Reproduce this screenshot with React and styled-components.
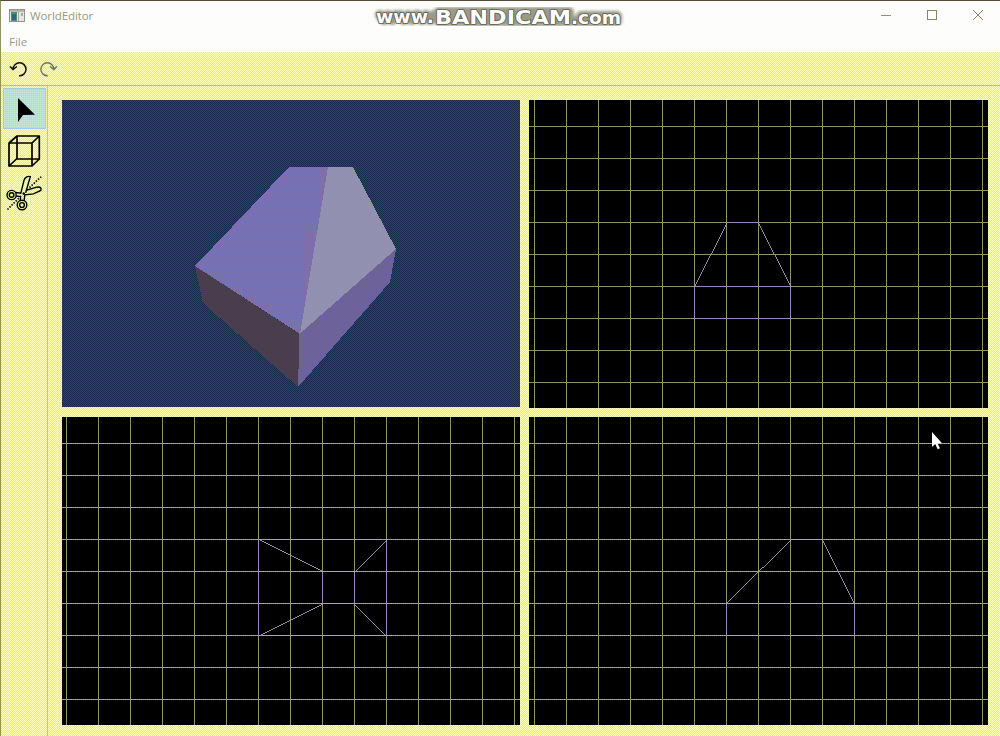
import React from "react";
import styled, { createGlobalStyle, css } from "styled-components";

const Global = createGlobalStyle`
  * { box-sizing: border-box; }
  body { margin: 0; overflow: hidden; }
`;

/* 2x2 ordered pattern that imitates a reduced colour palette */
const dither = (a, b, c, d) => css`
  background-image: conic-gradient(${b} 25%, ${d} 0 50%, ${c} 0 75%, ${a} 0);
  background-size: 2px 2px;
`;

const Window = styled.div`
  width: 1000px;
  height: 736px;
  display: flex;
  flex-direction: column;
  border-left: 1px solid #92925c;
  border-top: 1px solid #55493c;
  font-family: "Open Sans", "Noto Sans", sans-serif;
  font-size: 12px;
  color: #99997c;
  background-image: radial-gradient(circle at 0.5px 0.5px, #fff 0.6px, transparent 0.7px),
    conic-gradient(#dbdbff 25%, #ffffb0 0 50%, #dbdbff 0 75%, #ffffb0 0);
  background-size: 4px 4px, 2px 2px;
`;

const Header = styled.header`
  height: 51px;
  flex: none;
  background-color: #fdfdff;
  background-image: radial-gradient(circle at 0.5px 0.5px, #ffffaa 0.6px, transparent 0.7px),
    radial-gradient(circle at 4.5px 4.5px, #ffffaa 0.6px, transparent 0.7px);
  background-size: 8px 8px;
`;

const TitleBar = styled.div`
  height: 29px;
  display: flex;
  align-items: center;
  padding-left: 8px;
`;

const Title = styled.span`
  margin-left: 5px;
  width: 66px;
  font-size: 11.5px;
  letter-spacing: -0.1px;
`;

const Watermark = styled.svg`
  margin-left: 270px;
  margin-right: auto;
  display: block;
`;

const Controls = styled.div`
  display: flex;
  margin: -1px -1px 0 0;
`;

const Control = styled.button`
  width: 46px;
  height: 29px;
  padding: 0;
  border: 0;
  background: none;
  display: grid;
  place-items: center;
`;

const MenuBar = styled.nav`
  height: 22px;
  display: flex;
  align-items: center;
  padding-left: 8px;
  font-size: 11.5px;
`;

const Toolbar = styled.div`
  height: 34px;
  flex: none;
  display: flex;
  gap: 10px;
  padding: 6px 0 0 7px;
  border-bottom: 1px solid #b9b9a2;
`;

const Body = styled.div`
  flex: 1;
  display: flex;
`;

const Tools = styled.aside`
  width: 47px;
  flex: none;
  border-right: 1px solid #c2c2b4;
  padding: 2px 0 0 2px;
`;

const Tool = styled.button`
  width: 43px;
  height: 41px;
  margin: 0 0 2px;
  padding: 0;
  border: 0;
  display: grid;
  place-items: center;
  background: none;
  ${(p) =>
    p.$active &&
    css`
      ${dither("#b6dbff", "#c8e4dc", "#b6dbc0", "#b6dbff")}
      box-shadow: inset 0 0 0 1px #9ccdf0;
    `}
`;

const Views = styled.main`
  flex: 1;
  display: grid;
  grid-template-columns: 458px 459px;
  grid-template-rows: 308px 308px;
  gap: 9px;
  padding: 14px 0 0 14px;
  position: relative;
`;

const View = styled.svg`
  display: block;
  width: 100%;
  height: ${(p) => (p.$short ? "307px" : "100%")};
  background: #000;
`;

const Pointer = styled.svg`
  position: absolute;
  left: 883px;
  top: 346px;
`;

function Pattern({ id, c }) {
  return (
    <pattern id={id} width="2" height="2" patternUnits="userSpaceOnUse">
      {c.map((f, i) => (
        <rect key={i} x={i % 2} y={i >> 1} width="1" height="1" fill={f} />
      ))}
    </pattern>
  );
}

const VIOLET = "#a184b8";
const LILAC = "#aea2c0";

function Grid({ id, x0, y0, w, pale, wires }) {
  const xs = [];
  const ys = [];
  for (let x = x0; x < w; x += 32) xs.push(x);
  for (let y = y0; y < 308; y += 32) ys.push(y);
  const olive = ["#929255", "#929255", "#929285", "#929285"];
  return (
    <View viewBox={`0 0 ${w} 308`} shapeRendering="crispEdges">
      <defs>
        <Pattern id={id + "v"} c={pale ? [olive[2], olive[2], olive[0], olive[0]] : olive} />
        <Pattern
          id={id + "h"}
          c={pale ? ["#9292a0", "#b0b0a0", "#9292a0", "#b0b0a0"] : ["#929285", "#929255", "#929285", "#929255"]}
        />
      </defs>
      {ys.map((y) => (
        <rect key={y} x="0" y={y} width={w} height="1" fill={`url(#${id}h)`} />
      ))}
      {xs.map((x) => (
        <rect key={x} x={x} y="0" width="1" height="308" fill={`url(#${id}v)`} />
      ))}
      {wires.map(([d, color]) => (
        <path
          key={d}
          d={d}
          stroke={color}
          strokeWidth={color === LILAC ? 0.85 : 1}
          fill="none"
          transform="translate(.5 .5)"
        />
      ))}
    </View>
  );
}

export default function App() {
  return (
    <>
      <Global />
      <Window>
        <Header>
          <TitleBar>
            <svg width="16" height="14" viewBox="0 0 16 14" shapeRendering="crispEdges">
              <rect x=".5" y=".5" width="15" height="12" fill="#e4e6e0" stroke="#929292" />
              <rect x="1" y="1" width="14" height="2" fill="#b6b6aa" />
              <rect x="2" y="3" width="6" height="9" fill="#4a9278" />
              <rect x="3" y="5" width="4" height="6" fill="#31687a" />
              <rect x="9" y="3" width="1" height="9" fill="#a8a8a0" />
              <rect x="12" y="4" width="2" height="3" fill="#aaaaa0" />
            </svg>
            <Title>WorldEditor</Title>
            <Watermark width="264" height="29" viewBox="366 1 264 29">
              <defs>
                <filter id="halo" x="-5%" y="-50%" width="110%" height="200%">
                  <feGaussianBlur stdDeviation="1.4" />
                </filter>
              </defs>
              <path
                d="M380 15l4 5 4-5 4 5 4-5M400 15l4 5 4-5 4 5 4-5M418 15l4 5 4-5 4 5 4-5M439 12v9h130v-9zM575 21h42v-5h-36"
                fill="#9a9a88"
                stroke="#9a9a88"
                strokeWidth="10"
                strokeLinejoin="round"
                strokeLinecap="round"
                filter="url(#halo)"
              />
              <g fontFamily="DejaVu Sans" fontWeight="700" fill="#fff" stroke="#5c5c4e" strokeWidth="1.6" strokeLinejoin="round" paintOrder="stroke">
                <text x="376" y="23" fontSize="17" textLength="58" lengthAdjust="spacingAndGlyphs">www.</text>
                <text x="435" y="23.500" fontSize="19.5" textLength="136" lengthAdjust="spacingAndGlyphs">BANDICAM</text>
                <text x="571" y="23.500" fontSize="17" textLength="50" lengthAdjust="spacingAndGlyphs">.com</text>
              </g>
            </Watermark>
            <Controls>
              <Control>
                <svg width="12" height="12" shapeRendering="crispEdges"><path d="M1 6.500h10" stroke="#92927c" /></svg>
              </Control>
              <Control>
                <svg width="10" height="10" shapeRendering="crispEdges"><rect x=".5" y=".5" width="9" height="9" fill="none" stroke="#85856a" /></svg>
              </Control>
              <Control>
                <svg width="12" height="12"><path d="M1 1l10 10M11 1L1 11" stroke="#85856a" /></svg>
              </Control>
            </Controls>
          </TitleBar>
          <MenuBar>File</MenuBar>
        </Header>

        <Toolbar>
          <svg width="22" height="20" viewBox="8 58 22 20" fill="none" stroke="#111" strokeWidth="1.5">
            <path d="M13 69.300a6.500 6.500 0 1 1 6.100 6.500M10 66.500l3 3 3.900-3" />
          </svg>
          <svg width="22" height="20" viewBox="40 58 22 20" fill="none" stroke="#70706a" strokeWidth="1.4">
            <path d="M53.900 69.300a6.500 6.500 0 1 0-6.100 6.500M56.900 66.500l-3 3-3.900-3" />
          </svg>
        </Toolbar>

        <Body>
          <Tools>
            <Tool $active aria-label="Select">
              <svg width="43" height="41" viewBox="3 88 43 41"><path d="M18 98v24l5-7 12-.3z" fill="#000" /></svg>
            </Tool>
            <Tool aria-label="Box">
              <svg width="43" height="41" viewBox="3 131 43 41" fill="none" stroke="#000" strokeWidth="1.7" strokeLinejoin="round">
                <path d="M9 143h23v23H9zM17 136h22.300v23H17zM9 143l8-7M32 143l7.300-7M9 166l8-7.500M32 166l7.300-7" />
              </svg>
            </Tool>
            <Tool aria-label="Clip">
              <svg width="43" height="41" viewBox="3 174 43 41" fill="none" stroke="#000" strokeWidth="1.4">
                <path d="M7.500 209.500l12-12M29.500 187.500l12-11" strokeWidth="1.7" strokeDasharray="1.400 1.500" />
                <circle cx="11.600" cy="195" r="4.600" />
                <circle cx="11.600" cy="195" r="2.300" />
                <circle cx="22" cy="205" r="4.800" />
                <circle cx="22" cy="205" r="2.400" />
                <path d="M15.800 192.500l5 .8 3.200-13c.8-3 3.500-4.500 6.300-3.700l-4.600 16.200M16.200 196.200l4.400.2-.3 3.900M25.500 190.500l11.300-3.300c3.500-.8 5 .8 4 3.200l-7.300 3.500-8.700.9-.7 6" />
                <circle cx="23.700" cy="193.600" r=".6" />
              </svg>
            </Tool>
          </Tools>

          <Views>
            <View $short viewBox="62 100 458 307" shapeRendering="crispEdges">
              <defs>
                <Pattern id="sky" c={["#182c50", "#244955", "#244955", "#182850"]} />
                <Pattern id="slope" c={["#7a6daa", "#866db4", "#866daa", "#746dc4"]} />
                <Pattern id="lit" c={["#9290b0", "#9292b8", "#928eb0", "#9292aa"]} />
                <Pattern id="side" c={["#6d62a0", "#6d60a0", "#6d6488", "#6d649c"]} />
                <Pattern id="shade" c={["#493d52", "#493850", "#49404c", "#494149"]} />
              </defs>
              <rect x="62" y="100" width="458" height="307" fill="url(#sky)" />
              <path d="M289 167H328L300 334 195 266z" fill="url(#slope)" />
              <path d="M328 167H353L396 249 300 334z" fill="url(#lit)" />
              <path d="M195 266L299.500 334 298 387 203 303z" fill="url(#shade)" />
              <path d="M396 249L390 282 298 387 299.500 334z" fill="url(#side)" />
            </View>
            <Grid
              id="front" x0={5} y0={26} w={459}
              wires={[
                ["M165 186H261V218H165zM197 122h32", VIOLET],
                ["M165 186L197 122M229 122L261 186", LILAC],
              ]}
            />
            <Grid
              id="top" x0={4} y0={26} w={458} pale
              wires={[
                ["M196 122V218M324 122V218M260 154V186M292 154V186", VIOLET],
                ["M196 122H324M196 218H324M260 154h32M260 186h32", "#aaa2b4"],
                ["M196 122L260 154M292 154L324 122M196 218L260 186M292 186L324 218", LILAC],
              ]}
            />
            <Grid
              id="right" x0={5} y0={26} w={459} pale
              wires={[
                ["M197 186V218M325 186V218", VIOLET],
                ["M197 186H325M197 218H325M261 122h32", "#aaa2b4"],
                ["M197 186L261 122M293 122L325 186", LILAC],
              ]}
            />
            <Pointer width="12" height="19" viewBox="0 0 12 19">
              <path d="M1 0v15l3.200-3 2.500 5.200 2.200-1-2.400-5H11z" fill="#fff" />
            </Pointer>
          </Views>
        </Body>
      </Window>
    </>
  );
}
